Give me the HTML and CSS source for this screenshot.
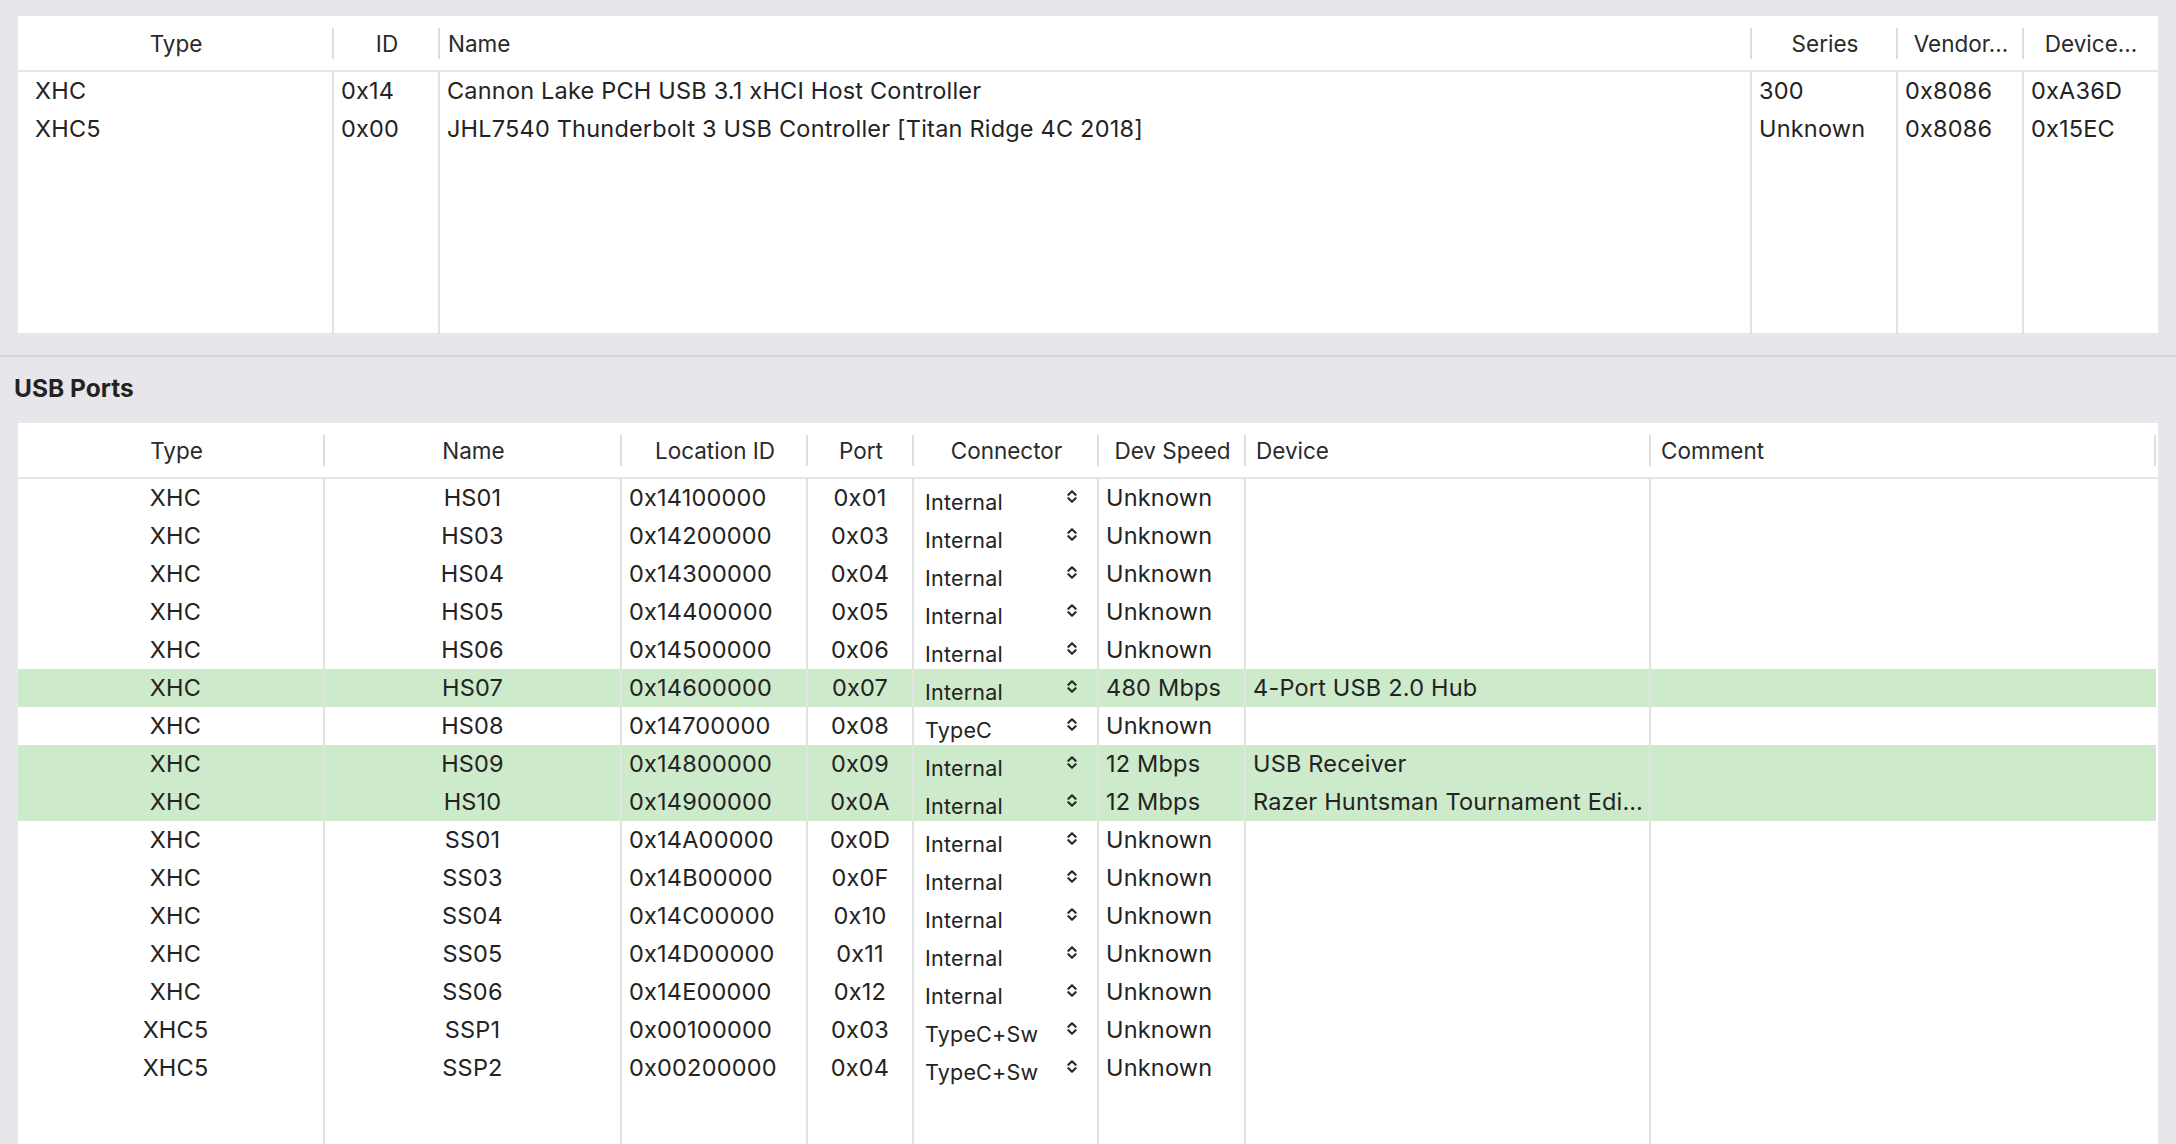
FILE: index.html
```html
<!DOCTYPE html>
<html>
<head>
<meta charset="utf-8">
<link rel="stylesheet" href="styles.css">
</head>
<body>
<section class="table controllers">
  <div class="row head">
    <div class="c ctr">Type</div>
    <div class="c ctr">ID</div>
    <div class="c lh">Name</div>
    <div class="c ctr">Series</div>
    <div class="c ctr">Vendor...</div>
    <div class="c ctr">Device...</div>
  </div>
  <div class="body">
    <div class="row">
      <div class="c first">XHC</div>
      <div class="c l">0x14</div>
      <div class="c l">Cannon Lake PCH USB 3.1 xHCI Host Controller</div>
      <div class="c l">300</div>
      <div class="c l">0x8086</div>
      <div class="c l">0xA36D</div>
    </div>
    <div class="row">
      <div class="c first">XHC5</div>
      <div class="c l">0x00</div>
      <div class="c l">JHL7540 Thunderbolt 3 USB Controller [Titan Ridge 4C 2018]</div>
      <div class="c l">Unknown</div>
      <div class="c l">0x8086</div>
      <div class="c l">0x15EC</div>
    </div>
    <div class="row filler">
      <div class="c"></div><div class="c"></div><div class="c"></div><div class="c"></div><div class="c"></div><div class="c"></div>
    </div>
  </div>
</section>

<div class="divider"></div>
<h2 class="section-title">USB Ports</h2>

<section class="table ports">
  <div class="row head">
    <div class="c ctr tp">Type</div>
    <div class="c ctr">Name</div>
    <div class="c ctr">Location ID</div>
    <div class="c ctr">Port</div>
    <div class="c ctr">Connector</div>
    <div class="c ctr">Dev Speed</div>
    <div class="c lh2">Device</div>
    <div class="c lh2">Comment</div>
    <div class="c nosep"></div>
  </div>
  <div class="body">
    <div class="row"><div class="c ctr tp">XHC</div><div class="c ctr">HS01</div><div class="c l">0x14100000</div><div class="c ctr">0x01</div><div class="c conn"><span>Internal</span><svg viewBox="0 0 10 13" width="10" height="13"><path d="M1.4 4.8L5 1.3L8.6 4.8M1.4 8.2L5 11.7L8.6 8.2"/></svg></div><div class="c l">Unknown</div><div class="c l"></div><div class="c l"></div><div class="c last"></div></div>
    <div class="row"><div class="c ctr tp">XHC</div><div class="c ctr">HS03</div><div class="c l">0x14200000</div><div class="c ctr">0x03</div><div class="c conn"><span>Internal</span><svg viewBox="0 0 10 13" width="10" height="13"><path d="M1.4 4.8L5 1.3L8.6 4.8M1.4 8.2L5 11.7L8.6 8.2"/></svg></div><div class="c l">Unknown</div><div class="c l"></div><div class="c l"></div><div class="c last"></div></div>
    <div class="row"><div class="c ctr tp">XHC</div><div class="c ctr">HS04</div><div class="c l">0x14300000</div><div class="c ctr">0x04</div><div class="c conn"><span>Internal</span><svg viewBox="0 0 10 13" width="10" height="13"><path d="M1.4 4.8L5 1.3L8.6 4.8M1.4 8.2L5 11.7L8.6 8.2"/></svg></div><div class="c l">Unknown</div><div class="c l"></div><div class="c l"></div><div class="c last"></div></div>
    <div class="row"><div class="c ctr tp">XHC</div><div class="c ctr">HS05</div><div class="c l">0x14400000</div><div class="c ctr">0x05</div><div class="c conn"><span>Internal</span><svg viewBox="0 0 10 13" width="10" height="13"><path d="M1.4 4.8L5 1.3L8.6 4.8M1.4 8.2L5 11.7L8.6 8.2"/></svg></div><div class="c l">Unknown</div><div class="c l"></div><div class="c l"></div><div class="c last"></div></div>
    <div class="row"><div class="c ctr tp">XHC</div><div class="c ctr">HS06</div><div class="c l">0x14500000</div><div class="c ctr">0x06</div><div class="c conn"><span>Internal</span><svg viewBox="0 0 10 13" width="10" height="13"><path d="M1.4 4.8L5 1.3L8.6 4.8M1.4 8.2L5 11.7L8.6 8.2"/></svg></div><div class="c l">Unknown</div><div class="c l"></div><div class="c l"></div><div class="c last"></div></div>
    <div class="row active"><div class="c ctr tp">XHC</div><div class="c ctr">HS07</div><div class="c l">0x14600000</div><div class="c ctr">0x07</div><div class="c conn"><span>Internal</span><svg viewBox="0 0 10 13" width="10" height="13"><path d="M1.4 4.8L5 1.3L8.6 4.8M1.4 8.2L5 11.7L8.6 8.2"/></svg></div><div class="c l">480 Mbps</div><div class="c l">4-Port USB 2.0 Hub</div><div class="c l"></div><div class="c last"></div></div>
    <div class="row"><div class="c ctr tp">XHC</div><div class="c ctr">HS08</div><div class="c l">0x14700000</div><div class="c ctr">0x08</div><div class="c conn"><span>TypeC</span><svg viewBox="0 0 10 13" width="10" height="13"><path d="M1.4 4.8L5 1.3L8.6 4.8M1.4 8.2L5 11.7L8.6 8.2"/></svg></div><div class="c l">Unknown</div><div class="c l"></div><div class="c l"></div><div class="c last"></div></div>
    <div class="row active"><div class="c ctr tp">XHC</div><div class="c ctr">HS09</div><div class="c l">0x14800000</div><div class="c ctr">0x09</div><div class="c conn"><span>Internal</span><svg viewBox="0 0 10 13" width="10" height="13"><path d="M1.4 4.8L5 1.3L8.6 4.8M1.4 8.2L5 11.7L8.6 8.2"/></svg></div><div class="c l">12 Mbps</div><div class="c l">USB Receiver</div><div class="c l"></div><div class="c last"></div></div>
    <div class="row active"><div class="c ctr tp">XHC</div><div class="c ctr">HS10</div><div class="c l">0x14900000</div><div class="c ctr">0x0A</div><div class="c conn"><span>Internal</span><svg viewBox="0 0 10 13" width="10" height="13"><path d="M1.4 4.8L5 1.3L8.6 4.8M1.4 8.2L5 11.7L8.6 8.2"/></svg></div><div class="c l">12 Mbps</div><div class="c l">Razer Huntsman Tournament Edi…</div><div class="c l"></div><div class="c last"></div></div>
    <div class="row"><div class="c ctr tp">XHC</div><div class="c ctr">SS01</div><div class="c l">0x14A00000</div><div class="c ctr">0x0D</div><div class="c conn"><span>Internal</span><svg viewBox="0 0 10 13" width="10" height="13"><path d="M1.4 4.8L5 1.3L8.6 4.8M1.4 8.2L5 11.7L8.6 8.2"/></svg></div><div class="c l">Unknown</div><div class="c l"></div><div class="c l"></div><div class="c last"></div></div>
    <div class="row"><div class="c ctr tp">XHC</div><div class="c ctr">SS03</div><div class="c l">0x14B00000</div><div class="c ctr">0x0F</div><div class="c conn"><span>Internal</span><svg viewBox="0 0 10 13" width="10" height="13"><path d="M1.4 4.8L5 1.3L8.6 4.8M1.4 8.2L5 11.7L8.6 8.2"/></svg></div><div class="c l">Unknown</div><div class="c l"></div><div class="c l"></div><div class="c last"></div></div>
    <div class="row"><div class="c ctr tp">XHC</div><div class="c ctr">SS04</div><div class="c l">0x14C00000</div><div class="c ctr">0x10</div><div class="c conn"><span>Internal</span><svg viewBox="0 0 10 13" width="10" height="13"><path d="M1.4 4.8L5 1.3L8.6 4.8M1.4 8.2L5 11.7L8.6 8.2"/></svg></div><div class="c l">Unknown</div><div class="c l"></div><div class="c l"></div><div class="c last"></div></div>
    <div class="row"><div class="c ctr tp">XHC</div><div class="c ctr">SS05</div><div class="c l">0x14D00000</div><div class="c ctr">0x11</div><div class="c conn"><span>Internal</span><svg viewBox="0 0 10 13" width="10" height="13"><path d="M1.4 4.8L5 1.3L8.6 4.8M1.4 8.2L5 11.7L8.6 8.2"/></svg></div><div class="c l">Unknown</div><div class="c l"></div><div class="c l"></div><div class="c last"></div></div>
    <div class="row"><div class="c ctr tp">XHC</div><div class="c ctr">SS06</div><div class="c l">0x14E00000</div><div class="c ctr">0x12</div><div class="c conn"><span>Internal</span><svg viewBox="0 0 10 13" width="10" height="13"><path d="M1.4 4.8L5 1.3L8.6 4.8M1.4 8.2L5 11.7L8.6 8.2"/></svg></div><div class="c l">Unknown</div><div class="c l"></div><div class="c l"></div><div class="c last"></div></div>
    <div class="row"><div class="c ctr tp">XHC5</div><div class="c ctr">SSP1</div><div class="c l">0x00100000</div><div class="c ctr">0x03</div><div class="c conn"><span>TypeC+Sw</span><svg viewBox="0 0 10 13" width="10" height="13"><path d="M1.4 4.8L5 1.3L8.6 4.8M1.4 8.2L5 11.7L8.6 8.2"/></svg></div><div class="c l">Unknown</div><div class="c l"></div><div class="c l"></div><div class="c last"></div></div>
    <div class="row"><div class="c ctr tp">XHC5</div><div class="c ctr">SSP2</div><div class="c l">0x00200000</div><div class="c ctr">0x04</div><div class="c conn"><span>TypeC+Sw</span><svg viewBox="0 0 10 13" width="10" height="13"><path d="M1.4 4.8L5 1.3L8.6 4.8M1.4 8.2L5 11.7L8.6 8.2"/></svg></div><div class="c l">Unknown</div><div class="c l"></div><div class="c l"></div><div class="c last"></div></div>
    <div class="row filler">
      <div class="c"></div><div class="c"></div><div class="c"></div><div class="c"></div><div class="c"></div><div class="c"></div><div class="c"></div><div class="c"></div><div class="c last"></div>
    </div>
  </div>
</section>
</body>
</html>
```

FILE: styles.css
```css
html, body {
  margin: 0;
  padding: 0;
}

body {
  width: 2176px;
  height: 1144px;
  overflow: hidden;
  background: #e8e6ea;
  font-family: Inter, "Noto Sans", sans-serif;
  color: #232323;
  display: flex;
  flex-direction: column;
}

.table {
  background: #ffffff;
  margin: 0 18px;
  display: flex;
  flex-direction: column;
}

.controllers {
  margin-top: 16px;
  height: 317px;
  flex: none;
}

.ports {
  flex: 1;
}

.row {
  display: grid;
}

.controllers .row {
  grid-template-columns: 316px 106px 1312px 146px 126px 1fr;
}

.ports .row {
  grid-template-columns: 307px 297px 186px 106px 185px 147px 405px 505px 1fr;
}

.c {
  box-sizing: border-box;
  white-space: nowrap;
  overflow: hidden;
}

.head {
  height: 54px;
  border-bottom: 2px solid #e4e4e4;
  flex: none;
}

.head .c {
  font-size: 22.5px;
  padding-top: 2px;
  line-height: 52px;
  color: #2a2a2a;
  background: linear-gradient(#dedede, #dedede) no-repeat right 0 top 12px / 2px 31px;
}

.head .c:last-child,
.head .c.nosep {
  background: none;
}

.ports .head .c:nth-child(8) {
  background: linear-gradient(#dedede, #dedede) no-repeat right 0 top 12px / 2px 31px;
}

.body {
  flex: 1;
  display: flex;
  flex-direction: column;
}

.body .row {
  height: 38px;
  flex: none;
}

.body .c {
  font-size: 23.5px;
  letter-spacing: 0.2px;
  line-height: 38px;
  border-right: 2px solid #e3e3e3;
}

.body .c:last-child {
  border-right: none;
}

.ports .body .c:nth-child(8) {
  border-right: none;
}

.body .filler {
  flex: 1;
  height: auto;
}

.ctr {
  text-align: center;
}

.l {
  padding-left: 7px;
}

.first {
  padding-left: 17px;
}

.lh {
  padding-left: 8px;
}

.lh2 {
  padding-left: 10px;
}

.tp {
  padding-left: 10px;
}

.row.active .c {
  background: #cdeaca;
}

.row.active .c.last {
  background: transparent;
}

.conn {
  display: flex;
  align-items: flex-start;
  justify-content: space-between;
  padding: 0 20px 0 11px;
}

.conn span {
  font-size: 21.5px;
  letter-spacing: 0.2px;
  line-height: 30px;
  padding-top: 8px;
}

.conn svg {
  margin-top: 11px;
  flex: none;
  fill: none;
  stroke: #2a2a2a;
  stroke-width: 2.2;
  stroke-linecap: round;
  stroke-linejoin: round;
}

.divider {
  height: 2px;
  margin-top: 22px;
  background: #d4d2d7;
  flex: none;
}

.section-title {
  margin: 0;
  padding-left: 14px;
  height: 66px;
  line-height: 63px;
  font-size: 24.5px;
  font-weight: 700;
  flex: none;
}
```
